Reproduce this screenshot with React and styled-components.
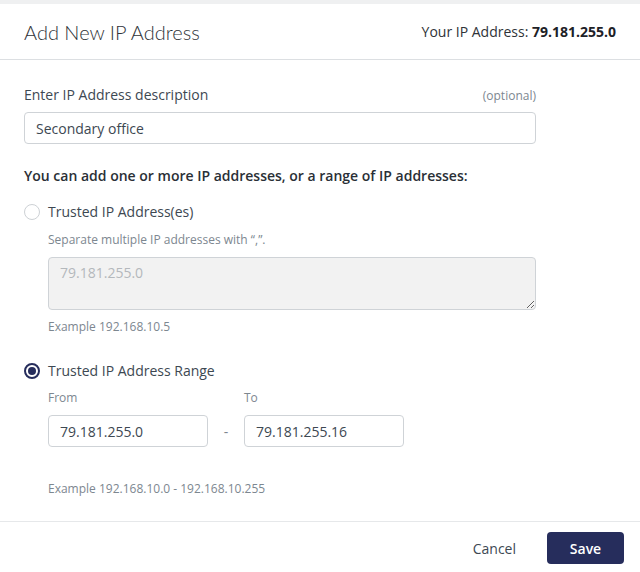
import React from "react";
import styled, { createGlobalStyle } from "styled-components";

const GlobalStyle = createGlobalStyle`
  html, body {
    margin: 0;
    padding: 0;
    background: #ffffff;
  }
  body {
    font-family: "Open Sans", "Liberation Sans", sans-serif;
    color: #3d4852;
  }
  * {
    box-sizing: border-box;
  }
`;

const Page = styled.div`
  width: 640px;
  height: 572px;
  display: flex;
  flex-direction: column;
  border-top: 4px solid #eff0f1;
  background: #ffffff;
`;

const Header = styled.div`
  display: flex;
  align-items: center;
  justify-content: space-between;
  height: 56px;
  padding: 0 24px;
  border-bottom: 1px solid #dcdfe2;
`;

const Title = styled.h2`
  margin: 0;
  font-family: Lato, "Open Sans", sans-serif;
  font-weight: 300;
  font-size: 20px;
  color: #2f3338;
`;

const YourIp = styled.div`
  font-size: 14px;
  color: #2f3338;

  b {
    font-weight: 700;
    color: #1d2126;
  }
`;

const Body = styled.form`
  flex: 1;
  display: flex;
  flex-direction: column;
  padding: 25px 104px 0 24px;
`;

const LabelRow = styled.div`
  display: flex;
  justify-content: space-between;
  align-items: baseline;
  margin-bottom: 8px;
`;

const Label = styled.label`
  font-size: 14px;
  color: #3d4852;
`;

const Optional = styled.span`
  font-size: 12px;
  color: #7d8790;
`;

const Field = styled.input`
  width: 100%;
  height: 32px;
  padding: 0 11px;
  border: 1px solid #cfd3d7;
  border-radius: 4px;
  font-family: inherit;
  font-size: 14px;
  color: #3d4852;
  background: #ffffff;
  outline: none;
`;

const Question = styled.div`
  margin-top: 22px;
  font-size: 14px;
  font-weight: 600;
  color: #2a2f36;
`;

const RadioRow = styled.label`
  display: flex;
  align-items: center;
  gap: 8px;
  margin-top: ${(p) => p.$top || 0}px;
  font-size: 14px;
  color: #3d4852;
`;

const Radio = styled.span`
  width: 16px;
  height: 16px;
  border-radius: 50%;
  border: ${(p) => (p.$checked ? "2px solid #262d5c" : "1px solid #cdd1d5")};
  display: flex;
  align-items: center;
  justify-content: center;

  &::after {
    content: "";
    display: ${(p) => (p.$checked ? "block" : "none")};
    width: 8px;
    height: 8px;
    border-radius: 50%;
    background: #262d5c;
  }
`;

const Indented = styled.div`
  padding-left: 24px;
  display: flex;
  flex-direction: column;
`;

const Hint = styled.div`
  font-size: 12px;
  color: #7d8790;
  margin-top: ${(p) => p.$top || 0}px;
`;

const Area = styled.textarea`
  margin-top: 9px;
  width: 100%;
  height: 53px;
  padding: 5px 11px;
  border: 1px solid #cfd3d7;
  border-radius: 4px;
  background: #f2f2f2;
  font-family: inherit;
  font-size: 14px;
  color: #b4b8bc;
  resize: vertical;
  outline: none;
`;

const RangeGrid = styled.div`
  display: grid;
  grid-template-columns: 160px 36px 160px;
  row-gap: 9px;
  margin-top: 9px;
  align-items: center;
`;

const SmallLabel = styled.span`
  font-size: 12px;
  color: #7d8790;
  grid-column: ${(p) => p.$col};
`;

const Dash = styled.span`
  text-align: center;
  color: #7d8790;
  font-size: 14px;
`;

const Footer = styled.div`
  display: flex;
  justify-content: flex-end;
  align-items: flex-start;
  gap: 31px;
  height: 51px;
  padding: 10px 16px 0 0;
  border-top: 1px solid #e6e8ea;
`;

const CancelButton = styled.button`
  height: 32px;
  padding: 0;
  border: none;
  background: none;
  font-family: inherit;
  font-size: 14px;
  color: #3d4852;
  cursor: pointer;
`;

const SaveButton = styled.button`
  width: 77px;
  height: 32px;
  border: none;
  border-radius: 4px;
  background: #262d5c;
  color: #ffffff;
  font-family: inherit;
  font-size: 14px;
  font-weight: 600;
  cursor: pointer;
`;

const App = () => {
  return (
    <>
      <GlobalStyle />
      <Page>
        <Header>
          <Title>Add New IP Address</Title>
          <YourIp>
            Your IP Address: <b>79.181.255.0</b>
          </YourIp>
        </Header>
        <Body>
          <LabelRow>
            <Label htmlFor="desc">Enter IP Address description</Label>
            <Optional>(optional)</Optional>
          </LabelRow>
          <Field id="desc" defaultValue="Secondary office" />

          <Question>
            You can add one or more IP addresses, or a range of IP addresses:
          </Question>

          <RadioRow $top={17}>
            <Radio />
            Trusted IP Address(es)
          </RadioRow>
          <Indented>
            <Hint $top={10}>Separate multiple IP addresses with “,”.</Hint>
            <Area disabled defaultValue="79.181.255.0" />
            <Hint $top={8}>Example 192.168.10.5</Hint>
          </Indented>

          <RadioRow $top={26}>
            <Radio $checked />
            Trusted IP Address Range
          </RadioRow>
          <Indented>
            <RangeGrid>
              <SmallLabel $col={1}>From</SmallLabel>
              <SmallLabel $col={3}>To</SmallLabel>
              <Field defaultValue="79.181.255.0" />
              <Dash>-</Dash>
              <Field defaultValue="79.181.255.16" />
            </RangeGrid>
            <Hint $top={33}>Example 192.168.10.0 - 192.168.10.255</Hint>
          </Indented>
        </Body>
        <Footer>
          <CancelButton type="button">Cancel</CancelButton>
          <SaveButton type="button">Save</SaveButton>
        </Footer>
      </Page>
    </>
  );
};

export default App;
